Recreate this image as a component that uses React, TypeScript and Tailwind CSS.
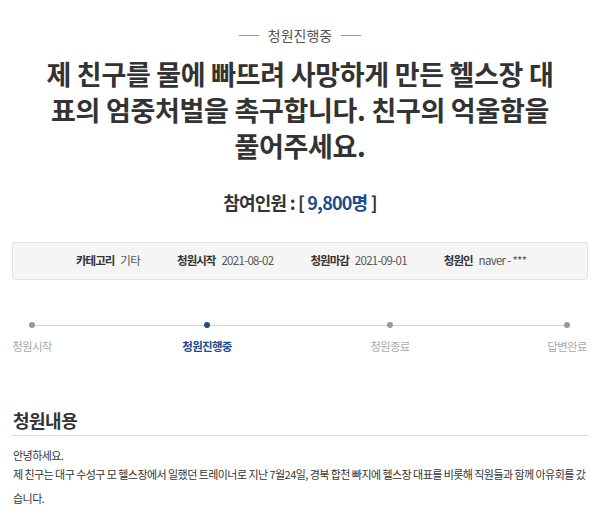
import React from 'react';

const info = [
  { label: '카테고리', value: '기타' },
  { label: '청원시작', value: '2021-08-02' },
  { label: '청원마감', value: '2021-09-01' },
  { label: '청원인', value: 'naver - ***' },
];

const steps = [
  { label: '청원시작', active: false, gap: 'w-[169px]' },
  { label: '청원진행중', active: true, gap: 'w-[177px]' },
  { label: '청원종료', active: false, gap: 'w-[171px]' },
  { label: '답변완료', active: false, gap: '' },
];

export default function App() {
  return (
    <main
      className="w-[600px] h-[506px] overflow-hidden bg-white text-[#333]"
      style={{ fontFamily: '"Noto Sans CJK KR", "Noto Sans", sans-serif' }}
    >
      {/* status badge */}
      <div className="flex items-center justify-center gap-[9px] pt-[22px] h-[48px]">
        <span className="w-[20px] h-px bg-[#999]"></span>
        <span className="text-[14px] leading-[20px] text-[#555]">청원진행중</span>
        <span className="w-[20px] h-px bg-[#999]"></span>
      </div>

      {/* title */}
      <h1 className="mt-[8px] text-center text-[27px] leading-[36px] font-bold tracking-[-0.3px] text-[#333]">
        제 친구를 물에 빠뜨려 사망하게 만든 헬스장 대<br />
        표의 엄중처벌을 촉구합니다. 친구의 억울함을<br />
        풀어주세요.
      </h1>

      {/* participants */}
      <div className="mt-[24px] text-center text-[18px] leading-[28px] font-bold text-[#333] tracking-[-0.8px]">
        참여인원 : [ <span className="text-[#1a4b8e]">9,800명</span> ]
      </div>

      {/* info box */}
      <div className="mx-[12px] mt-[26px] h-[38px] rounded-[3px] border border-[#e3e3e3] bg-[#f5f5f5] flex items-center gap-[37px] pl-[63px] text-[11.5px]">
        {info.map((it, i) => (
          <div key={i} className="flex items-center gap-[6px]">
            <span className="font-bold text-[#333] tracking-[-1px]">{it.label}</span>
            <span className="text-[#555] tracking-[-0.7px]">{it.value}</span>
          </div>
        ))}
      </div>

      {/* progress */}
      <div className="mt-[42px] flex pl-[29px]">
        {steps.map((s, i) => (
          <React.Fragment key={i}>
            <div className="flex flex-col items-center w-[6px]">
              <span className={`w-[6px] h-[6px] rounded-full ${s.active ? 'bg-[#1a4b8e]' : 'bg-[#999]'}`}></span>
              <span
                className={`mt-[10px] whitespace-nowrap text-[11.5px] leading-[16px] tracking-[-0.7px] ${
                  s.active ? 'font-bold text-[#1a4b8e]' : 'text-[#aaa]'
                }`}
              >
                {s.label}
              </span>
            </div>
            {s.gap && <span className={`${s.gap} h-px mt-[2.5px] bg-[#d5d5d5]`}></span>}
          </React.Fragment>
        ))}
      </div>

      {/* content */}
      <section className="mx-[12px] mt-[54px]">
        <h2 className="text-[18px] leading-[24px] font-bold text-[#333] pb-[3px] border-b border-[#ddd] tracking-[-0.5px] pl-[1px]">
          청원내용
        </h2>
        <div className="pt-[12px] text-[11px] text-[#333] tracking-[-0.55px] pl-[1px]">
          <p className="leading-[14px]">안녕하세요.</p>
          <p className="leading-[24px] whitespace-nowrap">
            제 친구는 대구 수성구 모 헬스장에서 일했던 트레이너로 지난 7월24일, 경북 합천 빠지에 헬스장 대표를 비롯해 직원들과 함께 아유회를 갔
            <br />
            습니다.
          </p>
        </div>
      </section>
    </main>
  );
}
